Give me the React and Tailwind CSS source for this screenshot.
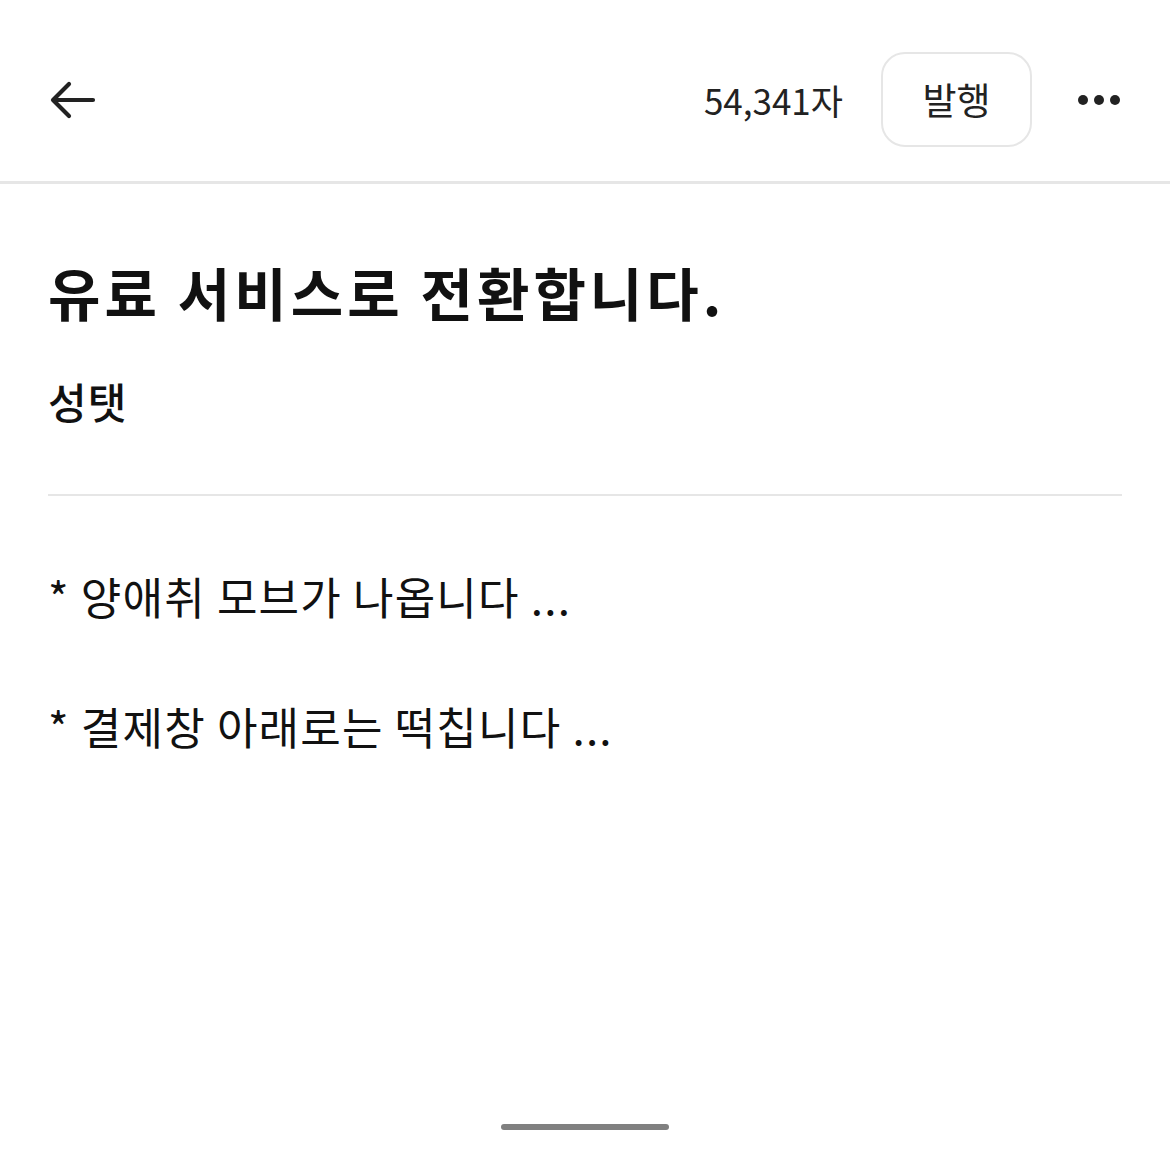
import React from "react";

const font = { fontFamily: '"Noto Sans CJK KR", "Noto Sans", sans-serif' };

export default function App() {
  return (
    <div className="w-[1170px] h-[1170px] bg-white flex flex-col text-[#1a1a1a]" style={font}>
      <header className="h-[184px] shrink-0 flex items-center border-b-[3px] border-[#e6e6e6] pt-[18px] pl-[48px] pr-[50px]">
        <svg width="48" height="40" viewBox="0 0 48 40" className="shrink-0 ml-[1px]">
          <path d="M44 20H5M20 4L4 20L20 36" fill="none" stroke="#222" strokeWidth="4.2" strokeLinecap="round" strokeLinejoin="round" />
        </svg>
        <div className="flex-1" />
        <span className="text-[35px] tracking-[0px] text-[#222] leading-none">54,341자</span>
        <button className="ml-[38px] w-[151px] h-[95px] rounded-[24px] border-2 border-[#e6e6e6] text-[37px] text-[#222] leading-none flex items-center justify-center">
          발행
        </button>
        <div className="ml-[46px] flex items-center gap-[6px]">
          <span className="w-[10px] h-[10px] rounded-full bg-[#222]" />
          <span className="w-[10px] h-[10px] rounded-full bg-[#222]" />
          <span className="w-[10px] h-[10px] rounded-full bg-[#222]" />
        </div>
      </header>
      <main className="px-[48px] flex flex-col">
        <h1 className="mt-[79px] text-[57px] font-bold leading-none tracking-[4px] text-[#111]">유료 서비스로 전환합니다.</h1>
        <h2 className="mt-[60px] text-[42px] font-medium leading-none tracking-[1px] text-[#111]">성탯</h2>
        <div className="mt-[72px] h-[2px] bg-[#e6e6e6]" />
        <p className="mt-[78px] text-[44px] leading-none tracking-[1.2px] text-[#111]">* 양애취 모브가 나옵니다 ...</p>
        <p className="mt-[86px] text-[44px] leading-none tracking-[1.2px] text-[#111]">* 결제창 아래로는 떡칩니다 ...</p>
      </main>
      <div className="flex-1" />
      <div className="flex justify-center pb-[40px]">
        <div className="w-[168px] h-[6px] bg-[#808080] rounded-full" />
      </div>
    </div>
  );
}
